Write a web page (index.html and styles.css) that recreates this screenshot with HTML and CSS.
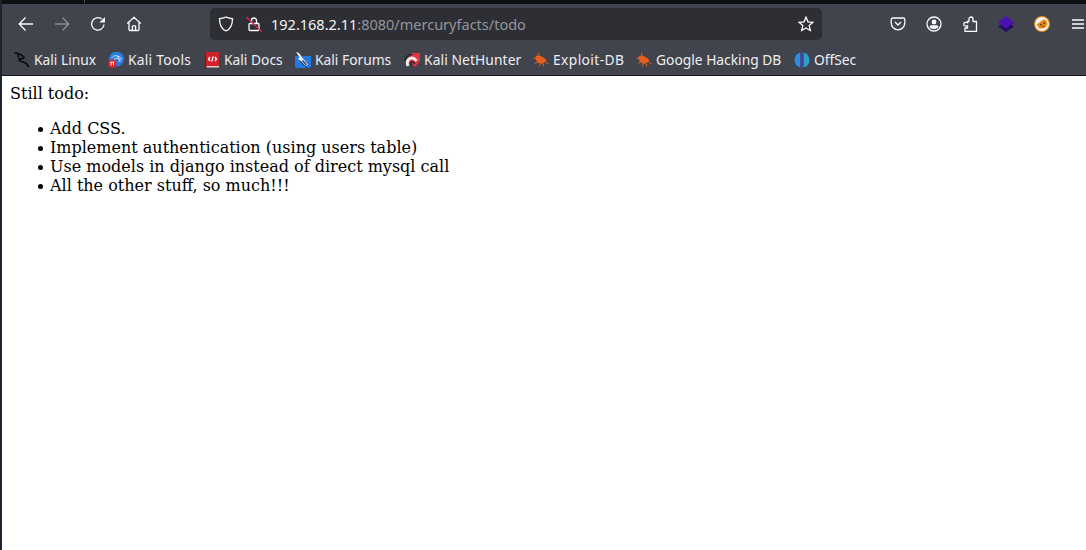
FILE: index.html
```html
<!DOCTYPE html>
<html lang="en">
<head>
<meta charset="utf-8">
<title>Still todo</title>
<link rel="stylesheet" href="styles.css">
</head>
<body>
<div class="window">
  <header class="chrome">
    <div class="titlebar"><span class="tab-divider"></span></div>
    <div class="navbar">
      <span class="btn"><svg class="ic" viewBox="0 0 16 16"><path d="M15 8H1.500M7.500 1.500 1.200 8l6.300 6.500"/></svg></span>
      <span class="btn dim"><svg class="ic" viewBox="0 0 16 16"><path d="M1 8h13.500M8.500 1.500 14.800 8l-6.300 6.500"/></svg></span>
      <span class="btn"><svg class="ic" viewBox="0 0 16 16"><path d="M14 8.500A6.200 6.200 0 1 1 11.600 3"/><path class="fill" d="M15 1v5.600H9.400z"/></svg></span>
      <span class="btn"><svg class="ic" viewBox="0 0 16 16"><path d="M1.200 7.600 8 1.300l6.800 6.300M3 6.300v7.200c0 .6.4 1 1 1h8c.6 0 1-.4 1-1V6.300M6.400 14.400v-4c0-.4.2-.6.6-.6h2c.4 0 .6.2.6.6v4"/></svg></span>
      <div class="urlbar">
        <svg class="ic shield" viewBox="0 0 16 16"><path d="M8 1c2 1 4.300 1.500 6.500 1.700 0 5.500-1.500 10-6.500 12.300C3 12.700 1.500 8.200 1.500 2.700 3.700 2.500 6 2 8 1z"/></svg>
        <svg class="ic lock" viewBox="0 0 16 16"><path d="M5.500 7.500V4.500a2.500 2.500 0 0 1 5 0v3M3 8.500c0-.6.400-1 1-1h8c.6 0 1 .4 1 1v5c0 .6-.4 1-1 1H4c-.6 0-1-.4-1-1z"/><path class="slash" d="M.5 1 15.500 15.500"/></svg>
        <span class="url"><span class="host">192.168.2.11</span>:8080/mercuryfacts/todo</span>
        <svg class="ic star" viewBox="0 0 16 16"><path d="M8 1.200 10 5.800l5 .5-3.800 3.300 1.100 4.900L8 12l-4.300 2.500 1.100-4.900L1 6.300l5-.5z"/></svg>
      </div>
      <div class="tools">
        <span class="btn"><svg class="ic" viewBox="0 0 16 16"><path d="M2.600 2h10.800c.8 0 1.400.6 1.400 1.400V7A6.800 6.800 0 0 1 1.200 7V3.400C1.200 2.600 1.800 2 2.600 2zM5 6l3 3 3-3"/></svg></span>
        <span class="btn"><svg class="ic" viewBox="0 0 16 16"><circle cx="8" cy="8" r="7"/><circle class="fill" cx="8" cy="6" r="2.400"/><path class="fill" d="M3.500 11c0-1.200 1.200-1.800 2.500-1.800h4c1.300 0 2.500.6 2.500 1.800-1 1.500-2.700 2-4.500 2s-3.500-.5-4.500-2z"/></svg></span>
        <span class="btn"><svg class="ic" viewBox="0 0 16 16"><path d="M5.500 5.500H7V3a2 2 0 0 1 4 0v2.500h3.500v10H3v-3.500h2.500V9.800c-1 .5-3.800.5-3.800-1.600s2.800-2.100 3.800-1.600z"/></svg></span>
        <span class="btn"><svg class="ext" viewBox="0 0 16 16"><path fill="#1f0f63" d="M8 5 16 10.500 8 16 0 10.500z"/><path fill="#4a12b0" d="M8 0 16 6.500 8 12.500 0 6.500z"/></svg></span>
        <span class="btn"><svg class="ext" viewBox="0 0 16 16"><circle cx="8" cy="8" r="8" fill="#e08a12"/><circle cx="8" cy="8" r="6.900" fill="#f2f2f2"/><path fill="#e8890f" d="M2.500 8.500 9.500 3.500l3 1 1 4-3 3.500-5 .8z"/><path fill="#41372c" d="M6 8h1.500v1.500H6zM9.500 6.500H11V8H9.500zM8.500 10H10v1H8.500z"/></svg></span>
        <span class="btn"><svg class="ic" viewBox="0 0 16 16"><path d="M2 4h12M2 8h12M2 12h12"/></svg></span>
      </div>
    </div>
    <nav class="bookmarks">
      <a class="mark w-linux"><svg class="fav" viewBox="0 0 16 16"><path fill="none" stroke="#0b0b0d" stroke-width="1.700" d="M.5 1.200C3 .6 6 1.800 8.500 3.800c1.300 1 1.800 2 .8 2.500C7.500 7 5.500 6 5 7.500c-.4 1.500 3 2 5.500 3 2 .8 3.500 2 4 4.500M4.500 2.500C3.800 4 4 5 5 5.500"/></svg><span>Kali Linux</span></a>
      <a class="mark w-tools"><svg class="fav" viewBox="0 0 16 16"><circle cx="8.500" cy="7" r="7.500" fill="#2a7de1"/><path fill="none" stroke="#cfe4fb" stroke-width="1" d="M3.500 6C6.500 2.500 10 3 14 7M6 7.500c2-1.800 4.500-1.800 7 1M9.500 4l2.500 6"/><circle cx="4.300" cy="11.700" r="4.300" fill="#e3242b"/><path stroke="#fff" stroke-width="1" d="M3.100 10v3.400M5.500 10v3.400M2.300 10.200h4"/></svg><span>Kali Tools</span></a>
      <a class="mark w-docs"><svg class="fav" viewBox="0 0 16 16"><path fill="#7d1418" d="M.8 1h2.500v15H.8z"/><path fill="#d0202a" d="M2 0h13v14H2z"/><path fill="#e8c9c9" d="M2.500 14H15v1.500H2.500z"/><path fill="none" stroke="#fff" stroke-width="1.300" d="M6 5 4.500 7 6 9M11 5l1.500 2L11 9M9.300 4.500 7.700 9.500"/></svg><span>Kali Docs</span></a>
      <a class="mark w-forums"><svg class="fav" viewBox="0 0 16 16"><path fill="#2378e4" d="M0 4h16v10a2 2 0 0 1-2 2H2a2 2 0 0 1-2-2z"/><path fill="none" stroke="#1b2c44" stroke-width="1" d="M5.500 9.500 12.500 16"/><path fill="#f4f4f4" d="M1 0l3 1 3.500 5 5.500 6.500-2 1.500L5 8 3 7.500 4.500 5z"/><path fill="#1b2c44" d="M8 8l4 4.500-1 .8-4-4.300z"/></svg><span>Kali Forums</span></a>
      <a class="mark w-hunter"><svg class="fav" viewBox="0 0 16 16"><path fill="#e5303f" d="M7 1h9v8l-5 6-6-6z"/><path fill="none" stroke="#25262c" stroke-width="1.500" d="M.8 9C1.500 4.500 5 2 8.500 2.500"/><path fill="none" stroke="#f3eeee" stroke-width="3" d="M4 14C2 9 5 5.500 8.500 6c1.800.3 3 1.300 4 3"/><path fill="none" stroke="#25262c" stroke-width="1.500" d="M7.500 13.500C6.500 11 7.500 9.500 9 9.800c.8.2 1.300.8 1.500 2"/></svg><span>Kali NetHunter</span></a>
      <a class="mark w-exploit"><svg class="fav" viewBox="0 0 16 16"><path fill="#e85c1c" d="M2.500 4c4-1 8.500.5 11 4.500-2 3-5.500 4-8 2.500C3.500 9.800 2.500 7 2.500 4z"/><path fill="none" stroke="#d9651f" stroke-width="1" d="M.5 6l3 1M2 11.500l3-2M6 14.500l2-3.500M11 14.500l-1-3M15.500 12l-3-2M5.500 1l.5 3"/></svg><span>Exploit-DB</span></a>
      <a class="mark w-ghdb"><svg class="fav" viewBox="0 0 16 16"><path fill="#e85c1c" d="M2.500 4c4-1 8.500.5 11 4.500-2 3-5.500 4-8 2.500C3.500 9.800 2.500 7 2.500 4z"/><path fill="none" stroke="#d9651f" stroke-width="1" d="M.5 6l3 1M2 11.500l3-2M6 14.500l2-3.500M11 14.500l-1-3M15.500 12l-3-2M5.500 1l.5 3"/></svg><span>Google Hacking DB</span></a>
      <a class="mark"><svg class="fav" viewBox="0 0 16 16"><path fill="#2a8fe8" d="M6.300.5v15A7.800 7.800 0 0 1 6.300.5z"/><path fill="#4a3fe0" d="M7.300 0h1.400v16H7.300z"/><path fill="#2f9fc4" d="M9.700.5a7.800 7.800 0 0 1 0 15z"/></svg><span>OffSec</span></a>
    </nav>
  </header>
  <main class="page">
    <p>Still todo:</p>
    <ul>
      <li>Add CSS.</li>
      <li>Implement authentication (using users table)</li>
      <li>Use models in django instead of direct mysql call</li>
      <li>All the other stuff, so much!!!</li>
    </ul>
  </main>
</div>
</body>
</html>
```
FILE: styles.css
```css
html, body {
  margin: 0;
  height: 100%;
  overflow: hidden;
  background: #fff;
}

.window {
  height: 100%;
  box-sizing: border-box;
  border-left: 2px solid #1c2430;
  display: flex;
  flex-direction: column;
}

.chrome {
  flex: none;
  background: #42444d;
  border-bottom: 1px solid #15161a;
  font-family: "Noto Sans", sans-serif;
  color: #fbfbfe;
}

.titlebar {
  height: 4px;
  padding-left: 82px;
  background: #0d0f13;
}

.tab-divider {
  display: block;
  width: 1px;
  height: 3px;
  background: #4a4c55;
}

.navbar {
  height: 40px;
  padding-left: 6px;
  display: flex;
  align-items: center;
}

.btn {
  flex: none;
  width: 36px;
  height: 32px;
  display: flex;
  align-items: center;
  justify-content: center;
}

.dim {
  opacity: 0.4;
}

.ic {
  width: 16px;
  height: 16px;
  fill: none;
  stroke: #fbfbfe;
  stroke-width: 1.3;
}

.ic .fill {
  fill: #fbfbfe;
  stroke: none;
}

.ext {
  width: 16px;
  height: 16px;
}

.urlbar {
  flex: none;
  width: 612px;
  height: 32px;
  margin-left: 58px;
  box-sizing: border-box;
  padding: 0 8px;
  border-radius: 5px;
  background: #2e2f35;
  display: flex;
  align-items: center;
}

.shield {
  margin-right: 12px;
}

.lock {
  margin-right: 9px;
}

.lock .slash {
  stroke: #e22850;
  stroke-width: 1.2;
}

.url {
  flex: 1;
  font-size: 14.5px;
  color: #94959b;
  white-space: nowrap;
}

.host {
  color: #f4f4f6;
}

.tools {
  flex: none;
  margin-left: 58px;
  display: flex;
}

.bookmarks {
  height: 31px;
  padding-left: 12px;
  display: flex;
  align-items: center;
  gap: 12px;
  font-size: 13.8px;
  color: #eeeef1;
  white-space: nowrap;
}

.mark {
  display: flex;
  align-items: center;
  gap: 4px;
}

.w-linux span { width: 62px; }
.w-tools span { width: 64px; letter-spacing: 0.25px; }
.w-docs span { width: 59px; }
.w-forums span { width: 77px; }
.w-hunter span { width: 97px; letter-spacing: 0.1px; }
.w-exploit span { width: 71px; letter-spacing: 0.4px; }
.w-ghdb span { width: 126px; }

.fav {
  flex: none;
  width: 16px;
  height: 16px;
}

.page {
  flex: 1;
  padding: 8px;
  font-family: "DejaVu Serif", serif;
  font-size: 16px;
  color: #000;
}

.page p {
  margin: 0 0 16px;
}

.page ul {
  margin: 0;
  padding-left: 40px;
  list-style: none;
}

.page li::before {
  content: "";
  display: inline-block;
  width: 5px;
  height: 5px;
  margin-left: -12.5px;
  margin-right: 7.5px;
  border-radius: 50%;
  background: #000;
  vertical-align: 2.5px;
}
```
